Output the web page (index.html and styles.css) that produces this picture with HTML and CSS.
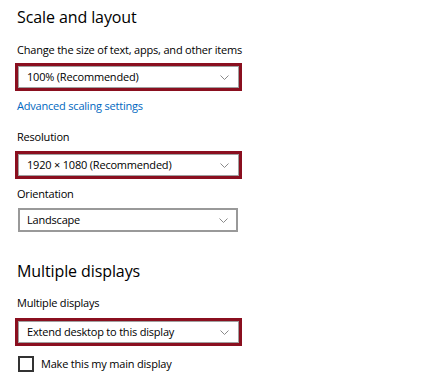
FILE: index.html
```html
<!DOCTYPE html>
<html>
<head>
<meta charset="utf-8">
<link rel="stylesheet" href="styles.css">
</head>
<body>
<div class="page">
  <h2 class="heading">Scale and layout</h2>
  <div class="label label-first">Change the size of text, apps, and other items</div>
  <div class="highlight hl-scale">
    <div class="combo combo-inner">
      <span class="combo-text">100% (Recommended)</span>
      <svg class="chev" width="9" height="5" viewBox="0 0 9 5"><polyline points="0.5,0.5 4.5,4.5 8.5,0.5" fill="none" stroke="#8a8a8a" stroke-width="1"/></svg>
    </div>
  </div>
  <a class="link">Advanced scaling settings</a>
  <div class="label label-res">Resolution</div>
  <div class="highlight hl-res">
    <div class="combo combo-inner">
      <span class="combo-text">1920 × 1080 (Recommended)</span>
      <svg class="chev" width="9" height="5" viewBox="0 0 9 5"><polyline points="0.5,0.5 4.5,4.5 8.5,0.5" fill="none" stroke="#8a8a8a" stroke-width="1"/></svg>
    </div>
  </div>
  <div class="label label-orient">Orientation</div>
  <div class="combo combo-plain">
    <span class="combo-text">Landscape</span>
    <svg class="chev" width="9" height="5" viewBox="0 0 9 5"><polyline points="0.5,0.5 4.5,4.5 8.5,0.5" fill="none" stroke="#8a8a8a" stroke-width="1"/></svg>
  </div>
  <h2 class="heading heading-2">Multiple displays</h2>
  <div class="label label-multi">Multiple displays</div>
  <div class="highlight hl-multi">
    <div class="combo combo-inner">
      <span class="combo-text">Extend desktop to this display</span>
      <svg class="chev" width="9" height="5" viewBox="0 0 9 5"><polyline points="0.5,0.5 4.5,4.5 8.5,0.5" fill="none" stroke="#8a8a8a" stroke-width="1"/></svg>
    </div>
  </div>
  <label class="check-row">
    <span class="checkbox"></span>
    <span class="check-text">Make this my main display</span>
  </label>
</div>
</body>
</html>
```
FILE: styles.css
```css
html, body {
  margin: 0;
  padding: 0;
  background: #ffffff;
}
body {
  font-family: "Open Sans", "Noto Sans", sans-serif;
  color: #000000;
}
.page {
  padding-left: 17px;
  display: flex;
  flex-direction: column;
  align-items: flex-start;
}
.heading {
  margin: 4px 0 0 0;
  font-size: 16px;
  font-weight: 400;
  line-height: 26px;
  height: 26px;
  letter-spacing: -0.1px;
}
.heading-2 {
  margin-top: 26px;
}
.label {
  font-size: 11px;
  letter-spacing: -0.2px;
  line-height: 16px;
  height: 16px;
  color: #000;
}
.label-first { margin-top: 12px; }
.label-res { margin-top: 15px; }
.label-orient { margin-top: 7px; }
.label-multi { margin-top: 11px; }
.highlight {
  margin-left: -2px;
  border: 3px solid #8a0f1f;
  box-sizing: border-box;
  width: 227px;
  height: 28px;
}
.hl-scale { margin-top: 5px; }
.hl-res { margin-top: 6px; }
.hl-multi { margin-top: 7px; }
.combo {
  display: flex;
  align-items: center;
  justify-content: space-between;
  box-sizing: border-box;
  font-size: 11px;
  letter-spacing: -0.2px;
  color: #000;
}
.combo-inner {
  width: 100%;
  height: 100%;
  border: 1px solid #a0a0a0;
  padding: 0 9px 0 8px;
}
.combo-plain {
  margin-top: 6px;
  margin-left: 1px;
  width: 220px;
  height: 24px;
  border: 2px solid #999999;
  padding: 0 8px 0 7px;
}
.combo-text {
  line-height: 16px;
}
.chev {
  display: block;
}
.link {
  margin-top: 7px;
  font-size: 11px;
  letter-spacing: -0.2px;
  line-height: 16px;
  height: 16px;
  color: #0067c0;
}
.check-row {
  margin-top: 10px;
  margin-left: 1px;
  display: flex;
  align-items: center;
  gap: 7px;
  font-size: 11px;
  letter-spacing: -0.2px;
}
.checkbox {
  width: 16px;
  height: 16px;
  box-sizing: border-box;
  border: 2px solid #333333;
}
.check-text {
  line-height: 16px;
}
```
